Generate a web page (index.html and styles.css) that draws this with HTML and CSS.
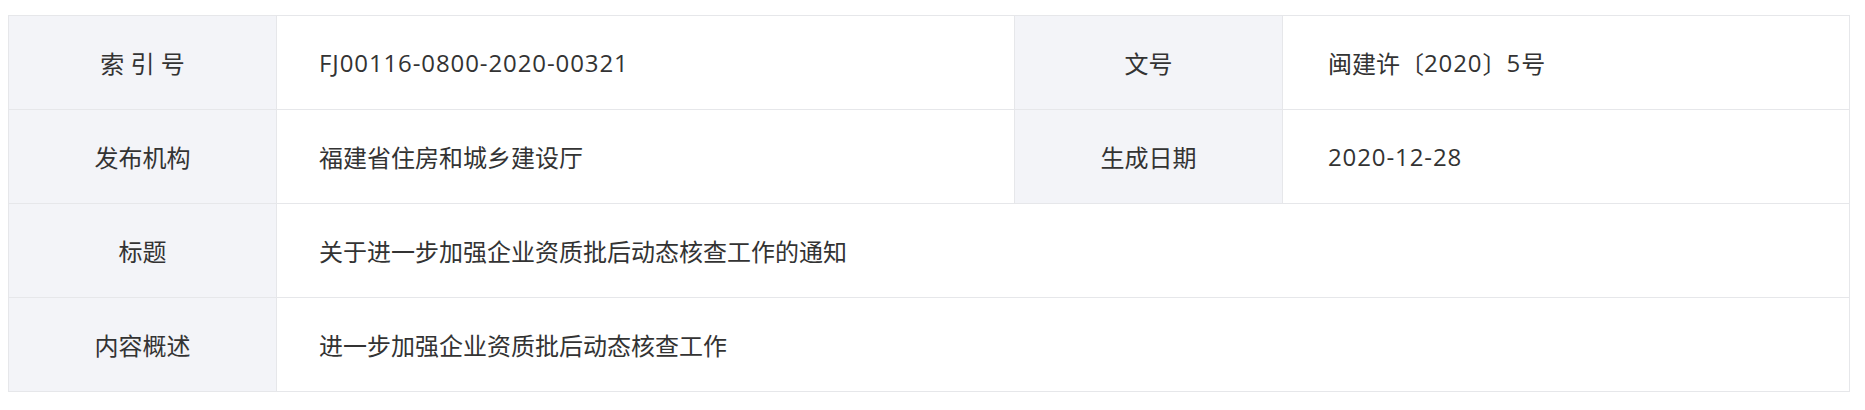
FILE: index.html
```html
<!DOCTYPE html>
<html lang="zh-CN">
<head>
<meta charset="utf-8">
<title>信息公开</title>
<link rel="stylesheet" href="styles.css">
</head>
<body>
<div class="info">
  <div class="cell label">索 引 号</div>
  <div class="cell value v1"><span class="latin">FJ00116-0800-2020-00321</span></div>
  <div class="cell label">文号</div>
  <div class="cell value v2">闽建许〔<span class="latin">2020</span>〕<span class="latin">5</span>号</div>

  <div class="cell label">发布机构</div>
  <div class="cell value v1">福建省住房和城乡建设厅</div>
  <div class="cell label">生成日期</div>
  <div class="cell value v2"><span class="latin">2020-12-28</span></div>

  <div class="cell label">标题</div>
  <div class="cell value v1 wide">关于进一步加强企业资质批后动态核查工作的通知</div>

  <div class="cell label">内容概述</div>
  <div class="cell value v1 wide">进一步加强企业资质批后动态核查工作</div>
</div>
</body>
</html>
```
FILE: styles.css
```css
html, body {
  margin: 0;
  padding: 0;
  background: #ffffff;
}
body {
  padding: 15px 16px 0 8px;
  font-family: "Open Sans", "Noto Sans CJK SC", sans-serif;
  font-size: 24px;
  color: #333333;
}
.info {
  display: grid;
  grid-template-columns: 268px 738px 268px 567px;
  grid-auto-rows: 94px;
  border-top: 1px solid #e6e7ea;
  border-left: 1px solid #e6e7ea;
  box-sizing: border-box;
  width: 1842px;
}
.cell {
  border-right: 1px solid #e6e7ea;
  border-bottom: 1px solid #e6e7ea;
  display: flex;
  align-items: center;
  box-sizing: border-box;
  white-space: nowrap;
}
.label {
  background: #f3f4f8;
  justify-content: center;
}
.value {
  background: #ffffff;
}
.v1 {
  padding-left: 42px;
}
.v2 {
  padding-left: 45px;
}
.wide {
  grid-column: span 3;
}
.latin {
  letter-spacing: 0.9px;
}
```
